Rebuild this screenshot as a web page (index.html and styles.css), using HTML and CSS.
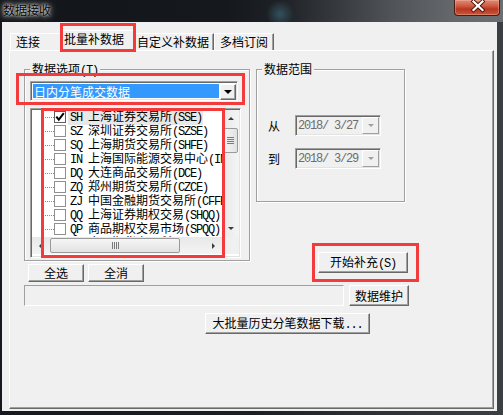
FILE: index.html
```html
<!DOCTYPE html>
<html lang="zh-CN">
<head>
<meta charset="utf-8">
<title>数据接收</title>
<link rel="stylesheet" href="styles.css">
</head>
<body>
<div class="window">
  <div class="titlebar">
    <span class="title">数据接收</span>
    <div class="close">
      <svg width="46" height="16" viewBox="0 0 46 16">
        <path d="M19.5 2.5 L28.5 11 M28.5 2.5 L19.5 11" stroke="#4a1208" stroke-width="4" stroke-linecap="square"/>
        <path d="M19.5 2.5 L28.5 11 M28.5 2.5 L19.5 11" stroke="#ffffff" stroke-width="2.2" stroke-linecap="square"/>
      </svg>
    </div>
  </div>
  <div class="client">
    <div class="tabs">
      <div class="tab t1">连接</div>
      <div class="tab sel">批量补数据</div>
      <div class="tab t3">自定义补数据</div>
      <div class="tab t4">多档订阅</div>
    </div>
    <div class="panel">
      <div class="toprow">
        <div class="leftcol">
          <div class="group g1">
            <span class="legend">数据选项<span class="a">(T)</span></span>
            <div class="combo">
              <div class="selbox">日内分笔成交数据</div>
              <div class="ddbtn"><i class="tri-down"></i></div>
            </div>
            <div class="list">
              <div class="items">
                <div class="row on"><i class="dot"></i><i class="cb chk"><svg width="12" height="12" viewBox="0 0 12 12"><path d="M2.3 5.6 L4.8 8.6 L9.8 2.2" fill="none" stroke="#000" stroke-width="2"/></svg></i><span class="txt"><span class="a code">SH</span>上海证券交易所<span class="a">(SSE)</span></span></div>
                <div class="row"><i class="dot"></i><i class="cb"></i><span class="txt"><span class="a code">SZ</span>深圳证券交易所<span class="a">(SZSE)</span></span></div>
                <div class="row"><i class="dot"></i><i class="cb"></i><span class="txt"><span class="a code">SQ</span>上海期货交易所<span class="a">(SHFE)</span></span></div>
                <div class="row"><i class="dot"></i><i class="cb"></i><span class="txt"><span class="a code">IN</span>上海国际能源交易中心<span class="a">(INE)</span></span></div>
                <div class="row"><i class="dot"></i><i class="cb"></i><span class="txt"><span class="a code">DQ</span>大连商品交易所<span class="a">(DCE)</span></span></div>
                <div class="row"><i class="dot"></i><i class="cb"></i><span class="txt"><span class="a code">ZQ</span>郑州期货交易所<span class="a">(CZCE)</span></span></div>
                <div class="row"><i class="dot"></i><i class="cb"></i><span class="txt"><span class="a code">ZJ</span>中国金融期货交易所<span class="a">(CFFEX)</span></span></div>
                <div class="row"><i class="dot"></i><i class="cb"></i><span class="txt"><span class="a code">QQ</span>上海证券期权交易<span class="a">(SHQQ)</span></span></div>
                <div class="row"><i class="dot"></i><i class="cb"></i><span class="txt"><span class="a code">QP</span>商品期权交易市场<span class="a">(SPQQ)</span></span></div>
                <div class="row"><i class="dot"></i><i class="cb"></i><span class="txt"><span class="a code">GZ</span>广州期货交易所<span class="a">(GFEX)</span></span></div>
              </div>
              <div class="vscroll">
                <div class="sarr"><i class="tri-up-s"></i></div>
                <div class="vthumb"><i class="grip-h"></i></div>
                <div class="sfill"></div>
                <div class="sarr"><i class="tri-down-s"></i></div>
              </div>
              <div class="hscroll">
                <div class="sarr"><i class="tri-left-s"></i></div>
                <div class="hthumb"><i class="grip-v"></i></div>
                <div class="sfill"></div>
                <div class="sarr"><i class="tri-right-s"></i></div>
              </div>
              <div class="corner"></div>
            </div>
          </div>
          <div class="btnrow">
            <button class="btn b-small">全选</button>
            <button class="btn b-small">全消</button>
          </div>
        </div>
        <div class="rightcol">
          <div class="group g2">
            <span class="legend">数据范围</span>
            <div class="daterow">
              <span class="dlabel">从</span>
              <div class="datefield"><span class="a dtext">2018/ 3/27</span><div class="dbtn"><i class="tri-down-g"></i></div></div>
            </div>
            <div class="daterow second">
              <span class="dlabel">到</span>
              <div class="datefield"><span class="a dtext">2018/ 3/29</span><div class="dbtn"><i class="tri-down-g"></i></div></div>
            </div>
          </div>
          <button class="btn b-start">开始补充<span class="a">(S)</span></button>
        </div>
      </div>
      <div class="row2">
        <div class="field"></div>
        <button class="btn b-maint">数据维护</button>
      </div>
      <div class="row3">
        <button class="btn b-big">大批量历史分笔数据下载<span class="a">...</span></button>
      </div>
    </div>
  </div>
  <div class="mark m-tab"></div>
  <div class="mark m-combo"></div>
  <div class="mark m-list"></div>
  <div class="mark m-start"></div>
</div>
</body>
</html>
```

FILE: styles.css
```css
* { box-sizing: border-box; }
html, body { margin: 0; padding: 0; }
body {
  width: 503px;
  height: 415px;
  overflow: hidden;
  background: #1c1f23;
  font-family: "Noto Sans CJK SC", "Noto Sans", sans-serif;
  font-size: 12px;
  line-height: 14px;
  color: #000;
}
i { font-style: normal; display: block; }
.a {
  font-family: "Liberation Mono", "DejaVu Sans Mono", monospace;
  letter-spacing: -1.2px;
}

.window {
  position: relative;
  width: 503px;
  height: 415px;
  background: linear-gradient(to right, #16191d 0%, #1b1e22 50%, #2e3135 75%, #3b3e42 100%);
}

.titlebar {
  height: 22px;
  display: flex;
  justify-content: space-between;
  align-items: flex-start;
  background:
    radial-gradient(ellipse 14px 14px at 280px 14px, rgba(90, 170, 200, 0.35), rgba(90, 170, 200, 0) 100%),
    linear-gradient(to right, #121519 0%, #15181c 45%, #1e2125 56%, #34373b 66%, #505357 78%, #65686b 90%, #6c6f72 100%);
}
.title {
  margin: 3px 0 0 3px;
  color: #000;
  text-shadow: 0 0 2px rgba(255, 255, 255, 0.9), 0 0 5px rgba(255, 255, 255, 0.8), 0 0 10px rgba(255, 255, 255, 0.6);
}
.close {
  width: 46px;
  height: 16px;
  margin-right: 3px;
  border: 1px solid #4b1a12;
  border-top: none;
  border-radius: 0 0 4px 4px;
  background: linear-gradient(to bottom, #e08b77 0%, #cf5a43 40%, #b9361f 60%, #c9563c 100%);
  box-shadow: inset 0 0 0 1px rgba(255, 200, 180, 0.35);
  overflow: hidden;
}
.close svg { display: block; margin: -1px 0 0 -1px; }

.client {
  margin-left: 2px;
  width: 495px;
  height: 389px;
  background: #f0f0f0;
}

.tabs {
  display: flex;
  align-items: flex-end;
  height: 28px;
  padding-left: 8px;
}
.tab {
  height: 17px;
  border-top: 1px solid #fff;
  border-left: 1px solid #fff;
  border-right: 1px solid #696969;
  box-shadow: inset -1px 0 0 #a0a0a0;
  background: #f0f0f0;
  line-height: 15px;
  white-space: nowrap;
}
.t1 { width: 53px; padding-left: 5px; }
.t3 { width: 81px; padding-left: 3px; }
.t4 { width: 60px; padding-left: 5px; }
.sel {
  position: relative;
  z-index: 1;
  width: 74px;
  height: 21px;
  margin: 0 -2px -1px -2px;
  padding: 1px 0 0 2px;
  line-height: 14px;
}

.panel {
  margin-left: 7px;
  width: 485px;
  height: 359px;
  border-top: 1px solid #fff;
  border-left: 1px solid #fff;
  border-right: 1px solid #696969;
  border-bottom: 1px solid #696969;
  box-shadow: inset -1px -1px 0 #a0a0a0;
  padding: 18px 0 0 14px;
}

.toprow { display: flex; align-items: flex-start; }
.leftcol { width: 226px; flex: none; }
.rightcol {
  margin-left: 6px;
  display: flex;
  flex-direction: column;
  align-items: flex-start;
}

.group {
  position: relative;
  border: 1px solid #a0a0a0;
  box-shadow: 1px 1px 0 #fff, inset 1px 1px 0 #fff;
}
.legend {
  position: absolute;
  top: -8px;
  left: 5px;
  padding: 0 2px;
  background: #f0f0f0;
  white-space: nowrap;
}
.g1 {
  width: 226px;
  height: 192px;
  padding: 11px 0 0 5px;
}
.g2 {
  width: 149px;
  height: 133px;
  padding: 45px 0 0 11px;
}

.combo {
  width: 208px;
  height: 20px;
  display: flex;
  border: 1px solid;
  border-color: #a0a0a0 #fff #fff #a0a0a0;
  box-shadow: inset 1px 1px 0 #696969, inset -1px -1px 0 #e3e3e3;
  background: #fff;
  padding: 2px 1px 2px 2px;
}
.selbox {
  flex: 1;
  background: #3399ff;
  color: #fff;
  padding-left: 1px;
  line-height: 16px;
  margin-right: 1px;
}
.ddbtn {
  width: 16px;
  height: 16px;
  border: 1px solid;
  border-color: #fff #696969 #696969 #fff;
  box-shadow: inset -1px -1px 0 #a0a0a0;
  background: #f0f0f0;
  display: flex;
  align-items: center;
  justify-content: center;
}
.tri-down {
  width: 0; height: 0;
  border-left: 4px solid transparent;
  border-right: 4px solid transparent;
  border-top: 4px solid #000;
}

.list {
  margin-top: 7px;
  width: 211px;
  height: 150px;
  border: 1px solid;
  border-color: #a0a0a0 #fff #fff #a0a0a0;
  box-shadow: inset 1px 1px 0 #696969, inset -1px -1px 0 #e3e3e3;
  background: #fff;
  padding: 1px;
  display: grid;
  grid-template-columns: 190px 17px;
  grid-template-rows: 127px 17px;
}
.items {
  overflow: hidden;
  background: #fff;
}
.row {
  display: flex;
  align-items: center;
  height: 14px;
  padding-left: 13px;
  white-space: nowrap;
}
.dot {
  width: 9px;
  height: 1px;
  flex: none;
  border-top: 1px dotted #8a8a8a;
}
.cb {
  width: 12px;
  height: 12px;
  flex: none;
  border: 1px solid #8e8f8f;
  background: #fff;
}
.cb.chk { border-color: #5e5e5e; }
.cb svg { display: block; margin: -1px 0 0 -1px; }
.txt {
  margin-left: 2px;
  padding: 0 1px 0 2px;
  line-height: 14px;
  flex: none;
}
.row.on .txt { background: #e8e8e8; }
.code { margin-right: 6px; }

.vscroll, .hscroll {
  display: flex;
  background: linear-gradient(to right, #e8e8e8, #f4f4f4);
}
.vscroll { flex-direction: column; grid-row: 1; grid-column: 2; }
.hscroll { background: linear-gradient(to bottom, #e8e8e8, #f4f4f4); }
.sarr {
  width: 17px;
  height: 17px;
  flex: none;
  display: flex;
  align-items: center;
  justify-content: center;
}
.sfill { flex: 1; }
.vthumb {
  margin: 1px 1px 0 1px;
  width: 15px;
  height: 25px;
  border: 1px solid #9a9a9a;
  border-radius: 2px;
  background: linear-gradient(to right, #f6f6f6, #e2e2e2);
  display: flex;
  align-items: center;
  justify-content: center;
}
.hthumb {
  margin: 1px 0 1px 1px;
  width: 130px;
  height: 15px;
  border: 1px solid #9a9a9a;
  border-radius: 2px;
  background: linear-gradient(to bottom, #f6f6f6, #e2e2e2);
  display: flex;
  align-items: center;
  justify-content: center;
}
.grip-h {
  width: 7px;
  height: 7px;
  background: repeating-linear-gradient(to bottom, #7a7a7a 0 1px, transparent 1px 2px);
}
.grip-v {
  width: 7px;
  height: 7px;
  background: repeating-linear-gradient(to right, #7a7a7a 0 1px, transparent 1px 2px);
}
.tri-up-s {
  width: 0; height: 0;
  border-left: 3px solid transparent;
  border-right: 3px solid transparent;
  border-bottom: 3px solid #3c3c3c;
}
.tri-down-s {
  width: 0; height: 0;
  border-left: 3px solid transparent;
  border-right: 3px solid transparent;
  border-top: 3px solid #3c3c3c;
}
.tri-left-s {
  width: 0; height: 0;
  border-top: 3px solid transparent;
  border-bottom: 3px solid transparent;
  border-right: 3px solid #3c3c3c;
}
.tri-right-s {
  width: 0; height: 0;
  border-top: 3px solid transparent;
  border-bottom: 3px solid transparent;
  border-left: 3px solid #3c3c3c;
}
.corner { background: #f0f0f0; }

.daterow {
  display: flex;
  align-items: center;
  height: 21px;
}
.daterow.second { margin-top: 12px; }
.dlabel { width: 27px; flex: none; }
.datefield {
  width: 86px;
  height: 21px;
  display: flex;
  align-items: center;
  border: 1px solid;
  border-color: #a0a0a0 #fff #fff #a0a0a0;
  box-shadow: inset 1px 1px 0 #696969, inset -1px -1px 0 #e3e3e3;
  background: #f0f0f0;
  padding: 1px;
}
.dtext {
  padding-left: 1px;
  color: #6d6d6d;
  white-space: pre;
}
.dbtn {
  margin-left: auto;
  width: 17px;
  height: 17px;
  border: 1px solid;
  border-color: #fff #a0a0a0 #a0a0a0 #fff;
  background: #f0f0f0;
  display: flex;
  align-items: center;
  justify-content: center;
}
.tri-down-g {
  width: 0; height: 0;
  border-left: 3px solid transparent;
  border-right: 3px solid transparent;
  border-top: 3px solid #a0a0a0;
}

.btn {
  font: inherit;
  font-size: 12px;
  line-height: 14px;
  color: #000;
  border: 1px solid;
  border-color: #fff #696969 #696969 #fff;
  box-shadow: inset -1px -1px 0 #a0a0a0;
  background: #f0f0f0;
  padding: 0;
  border-radius: 0;
  white-space: nowrap;
}
.btnrow {
  display: flex;
  gap: 4px;
  margin: 3px 0 0 4px;
}
.b-small { width: 56px; height: 18px; }
.b-start {
  margin: 50px 0 0 62px;
  width: 90px;
  height: 21px;
}
.row2 {
  display: flex;
  gap: 5px;
  margin-top: 3px;
}
.field {
  width: 320px;
  height: 21px;
  border: 1px solid;
  border-color: #a0a0a0 #fff #fff #a0a0a0;
  background: #f0f0f0;
}
.b-maint { width: 60px; height: 21px; }
.row3 { margin: 7px 0 0 181px; }
.b-big { width: 165px; height: 21px; }

.mark {
  position: absolute;
  border: 3px solid #f33b3b;
  z-index: 5;
}
.m-tab { left: 60px; top: 23px; width: 76px; height: 29px; }
.m-combo { left: 16px; top: 73px; width: 229px; height: 32px; }
.m-list { left: 41px; top: 108px; width: 184px; height: 150px; }
.m-start { left: 312px; top: 243px; width: 107px; height: 39px; }
```
